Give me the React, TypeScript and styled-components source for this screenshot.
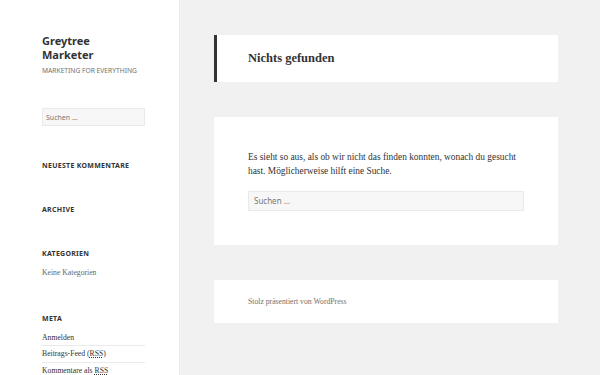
import styled, { createGlobalStyle } from "styled-components";

const GlobalStyle = createGlobalStyle`
  html, body {
    margin: 0;
    padding: 0;
    background: #f1f1f1;
  }
  body {
    font-family: "Liberation Serif", serif;
    color: #333;
  }
  * {
    box-sizing: border-box;
  }
`;

const Page = styled.div`
  display: flex;
  min-height: 375px;
`;

const Sidebar = styled.aside`
  width: 179px;
  flex-shrink: 0;
  background: #fff;
  box-shadow: 0 0 1px rgba(0, 0, 0, 0.15);
  padding: 34px 34px 0 42px;
`;

const SiteTitle = styled.h1`
  margin: 0;
  font-family: "Noto Sans", sans-serif;
  font-weight: 700;
  font-size: 11px;
  line-height: 14px;
  color: #333;
`;

const Tagline = styled.p`
  margin: 4px 0 0;
  font-family: "Noto Sans", sans-serif;
  font-size: 6.7px;
  line-height: 10px;
  color: #707070;
`;

const SearchBox = styled.div<{ $wide?: boolean }>`
  height: ${(p) => (p.$wide ? "20px" : "18px")};
  background: #f7f7f7;
  border: 1px solid #eaeaea;
  display: flex;
  align-items: center;
  padding-left: ${(p) => (p.$wide ? "5px" : "3px")};
  font-family: "Noto Sans", sans-serif;
  font-size: ${(p) => (p.$wide ? "8px" : "7px")};
  color: #777;
`;

const SidebarSearch = styled.div`
  margin-top: 32px;
  margin-bottom: 34px;
`;

const Widget = styled.section`
  margin-bottom: 32px;
`;

const WidgetTitle = styled.h2`
  margin: 0;
  font-family: "Noto Sans", sans-serif;
  font-weight: 700;
  font-size: 7px;
  line-height: 12px;
  letter-spacing: 0.04em;
  text-transform: uppercase;
  color: #333;
`;

const WidgetList = styled.ul`
  list-style: none;
  margin: 5px 0 0;
  padding: 0;
`;

const WidgetItem = styled.li<{ $muted?: boolean }>`
  font-size: 7.7px;
  line-height: 14px;
  padding: 1px 0 0.5px;
  color: ${(p) => (p.$muted ? "#666" : "#333")};
  & + & {
    border-top: 1px solid rgba(51, 51, 51, 0.1);
  }
  abbr {
    text-decoration: underline dotted;
  }
`;

const Main = styled.main`
  flex: 1;
  padding: 35px 42px 0 35px;
  display: flex;
  flex-direction: column;
  gap: 35px;
`;

const Card = styled.div`
  background: #fff;
  padding: 0 34px;
`;

const HeaderCard = styled(Card)`
  height: 47px;
  border-left: 3px solid #333;
  padding-left: 31px;
  display: flex;
  align-items: center;
`;

const PageTitle = styled.h1`
  margin: 0;
  font-weight: 700;
  font-size: 12.5px;
  color: #333;
`;

const ContentCard = styled(Card)`
  padding-top: 33px;
  padding-bottom: 34px;
`;

const BodyText = styled.p`
  margin: 0 0 12px;
  font-size: 9.4px;
  line-height: 14.4px;
  color: #333;
  max-width: 276px;
`;

const FooterCard = styled(Card)`
  height: 43px;
  display: flex;
  align-items: center;
  font-size: 7.7px;
  color: #707070;
`;

export default function App() {
  return (
    <>
      <GlobalStyle />
      <Page>
        <Sidebar>
          <SiteTitle>
            Greytree
            <br />
            Marketer
          </SiteTitle>
          <Tagline>MARKETING FOR EVERYTHING</Tagline>
          <SidebarSearch>
            <SearchBox>Suchen …</SearchBox>
          </SidebarSearch>
          <Widget>
            <WidgetTitle>Neueste Kommentare</WidgetTitle>
          </Widget>
          <Widget>
            <WidgetTitle>Archive</WidgetTitle>
          </Widget>
          <Widget>
            <WidgetTitle>Kategorien</WidgetTitle>
            <WidgetList>
              <WidgetItem $muted>Keine Kategorien</WidgetItem>
            </WidgetList>
          </Widget>
          <Widget>
            <WidgetTitle>Meta</WidgetTitle>
            <WidgetList>
              <WidgetItem>Anmelden</WidgetItem>
              <WidgetItem>
                Beitrags-Feed (<abbr>RSS</abbr>)
              </WidgetItem>
              <WidgetItem>
                Kommentare als <abbr>RSS</abbr>
              </WidgetItem>
            </WidgetList>
          </Widget>
        </Sidebar>
        <Main>
          <HeaderCard>
            <PageTitle>Nichts gefunden</PageTitle>
          </HeaderCard>
          <ContentCard>
            <BodyText>
              Es sieht so aus, als ob wir nicht das finden konnten, wonach du
              gesucht hast. Möglicherweise hilft eine Suche.
            </BodyText>
            <SearchBox $wide>Suchen …</SearchBox>
          </ContentCard>
          <FooterCard>Stolz präsentiert von WordPress</FooterCard>
        </Main>
      </Page>
    </>
  );
}
